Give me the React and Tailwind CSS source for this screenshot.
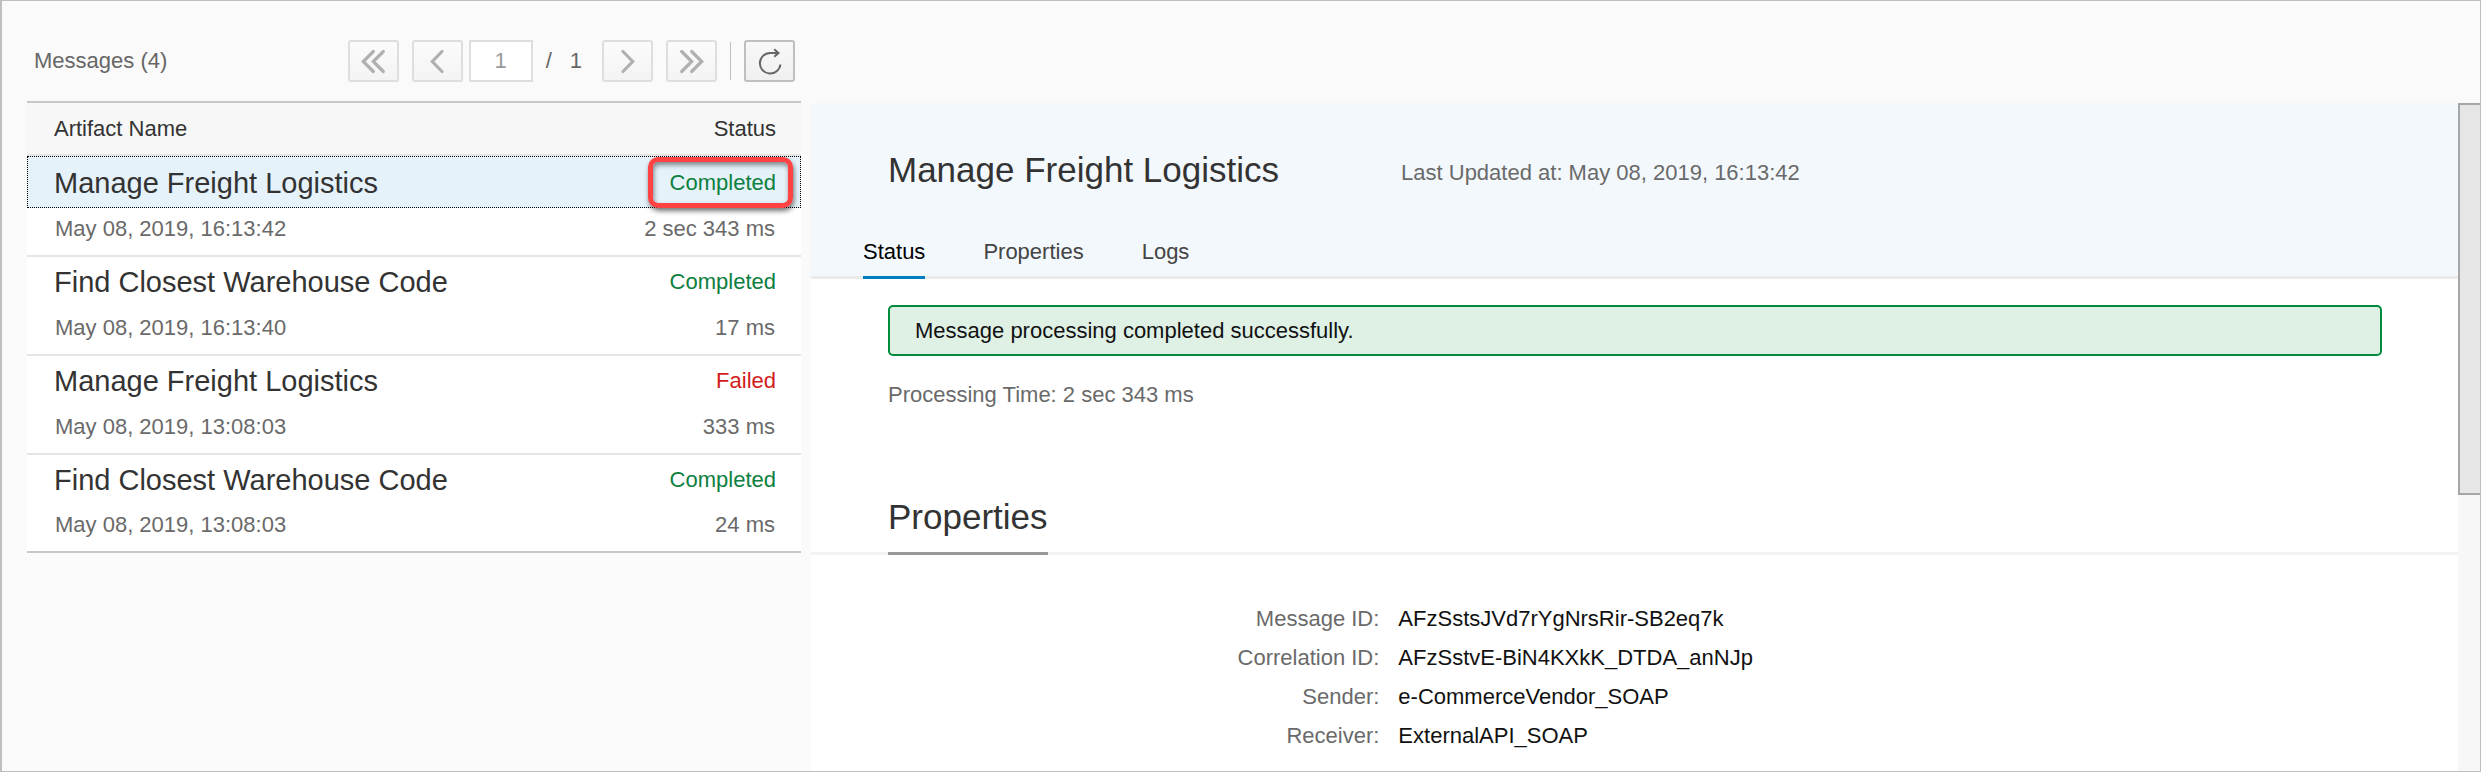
const messages = [
  { name: "Manage Freight Logistics", date: "May 08, 2019, 16:13:42", status: "Completed", duration: "2 sec 343 ms", selected: true },
  { name: "Find Closest Warehouse Code", date: "May 08, 2019, 16:13:40", status: "Completed", duration: "17 ms" },
  { name: "Manage Freight Logistics", date: "May 08, 2019, 13:08:03", status: "Failed", duration: "333 ms" },
  { name: "Find Closest Warehouse Code", date: "May 08, 2019, 13:08:03", status: "Completed", duration: "24 ms" },
];

const properties = [
  ["Message ID:", "AFzSstsJVd7rYgNrsRir-SB2eq7k"],
  ["Correlation ID:", "AFzSstvE-BiN4KXkK_DTDA_anNJp"],
  ["Sender:", "e-CommerceVendor_SOAP"],
  ["Receiver:", "ExternalAPI_SOAP"],
];

const iconPaths = {
  first: "M15.3 5.5 5.3 15.5 15.3 25.5M25.3 5.5 15.3 15.5 25.3 25.5",
  previous: "M20 5.5 10.3 15.5 20 25.5",
  next: "M10 5.5 19.7 15.5 10 25.5",
  last: "M4.7 5.5 14.7 15.5 4.7 25.5M14.7 5.5 24.7 15.5 14.7 25.5",
};

function PageButton({ icon, label }) {
  return (
    <button
      type="button"
      aria-label={label}
      disabled
      className="flex h-[42px] w-[51px] items-center justify-center rounded-[3px] border-2 border-[#dedede] bg-linear-to-b from-[#fbfbfb] to-[#f4f4f4] text-[#b0b0b0]"
    >
      <svg viewBox="0 0 30 30" className="size-[30px]" fill="none" stroke="currentColor" strokeWidth="3.2" strokeLinecap="round">
        <path d={iconPaths[icon]} />
      </svg>
    </button>
  );
}

function Toolbar() {
  return (
    <div className="flex items-center pt-[39px] pr-[6px] pb-[19px] pl-[7px] text-[#666]">
      <h2 className="flex-1">Messages (4)</h2>
      <div className="flex items-center gap-[13px]">
        <PageButton icon="first" label="First page" />
        <div className="flex items-center gap-[6px]">
          <PageButton icon="previous" label="Previous page" />
          <input
            aria-label="Page"
            defaultValue="1"
            disabled
            className="h-[42px] w-[64px] border-2 border-[#dedede] bg-white text-center text-[#999]"
          />
        </div>
        <span className="flex gap-[18px] pr-[7px]">
          <span>/</span>
          <span>1</span>
        </span>
        <PageButton icon="next" label="Next page" />
        <PageButton icon="last" label="Last page" />
        <span className="h-[38px] w-px bg-[#bfbfbf]" />
        <button
          type="button"
          aria-label="Refresh"
          className="flex h-[42px] w-[51px] items-center justify-center rounded-[3px] border-2 border-[#bfbfbf] bg-linear-to-b from-[#f8f8f8] to-[#f0f0f0] text-[#666]"
        >
          <svg viewBox="0 0 30 30" className="size-[30px]" fill="none" stroke="currentColor" strokeWidth="2">
            <path d="M25.4 18.5A10.3 10.3 0 1 1 15.2 7H23.5M19.2 3.2 23.5 7 19.2 10.8" />
          </svg>
        </button>
      </div>
    </div>
  );
}

function Message({ message }) {
  const { name, date, status, duration, selected } = message;
  return (
    <tbody className="group">
      <tr
        className={
          selected
            ? "h-[52px] bg-[#e5f2fa] outline-1 -outline-offset-1 outline-dotted outline-black"
            : "h-[50px]"
        }
      >
        <td className="pb-[8px] pl-[27px] align-bottom text-[29px] leading-[34px] text-[#333]">{name}</td>
        <td
          className={
            status === "Failed"
              ? "pr-[25px] pb-[10px] text-right align-bottom text-[#d11d1d]"
              : "pr-[25px] pb-[10px] text-right align-bottom text-[#0d8040]"
          }
        >
          <span className="relative inline-block">
            {status}
            {selected && (
              <span className="absolute -top-[11px] -right-[17px] -bottom-[10px] -left-[22px] rounded-[10px] border-5 border-[#ff4343] shadow-[1px_3px_5px_rgba(0,0,0,0.55),inset_1px_3px_5px_rgba(0,0,0,0.45)]" />
            )}
          </span>
        </td>
      </tr>
      <tr className="h-[49px] text-[#6a6a6a] group-last:h-[46px]">
        <td className="border-b-2 border-[#e5e5e5] pb-[11px] pl-[28px] align-bottom group-last:border-b-0">{date}</td>
        <td className="border-b-2 border-[#e5e5e5] pr-[26px] pb-[11px] text-right align-bottom group-last:border-b-0">{duration}</td>
      </tr>
    </tbody>
  );
}

function MessageList() {
  return (
    <section className="pr-[10px] pl-[25px]">
      <Toolbar />
      <div className="border-y-2 border-[#c8c8c8] bg-white">
        <table className="w-full border-separate border-spacing-0">
          <thead className="bg-[#f7f7f7] text-[#333]">
            <tr className="h-[53px]">
              <th className="border-b-2 border-[#e5e5e5] pl-[27px] text-left font-normal">Artifact Name</th>
              <th className="border-b-2 border-[#e5e5e5] pr-[25px] text-right font-normal">Status</th>
            </tr>
          </thead>
          {messages.map((message, i) => (
            <Message key={i} message={message} />
          ))}
        </table>
      </div>
    </section>
  );
}

function Detail() {
  return (
    <section className="mt-[102px] flex bg-white">
      <div className="min-w-0 flex-1">
        <header className="border-b-3 border-[#ebebeb] bg-[#f3f8fc]">
          <div className="flex items-center gap-[122px] pt-[46px] pl-[77px]">
            <h1 className="text-[35px] leading-[42px] text-[#333]">Manage Freight Logistics</h1>
            <p className="pt-[5px] text-[#6a6a6a]">Last Updated at: May 08, 2019, 16:13:42</p>
          </div>
          <nav className="-mb-[3px] flex gap-[58px] pt-[46px] pl-[52px] text-[#444]">
            <a href="#status" aria-current="page" className="border-b-3 border-[#007cc0] pb-[9px] text-black">Status</a>
            <a href="#properties" className="pb-[9px]">Properties</a>
            <a href="#logs" className="pb-[9px]">Logs</a>
          </nav>
        </header>
        <div id="status" className="pt-[26px] pr-[76px] pl-[77px]">
          <p role="status" className="flex h-[51px] items-center rounded-[5px] border-2 border-[#008c3c] bg-[#dff0e5] px-[25px] text-[#111]">
            Message processing completed successfully.
          </p>
          <p className="pt-[24px] text-[#6a6a6a]">Processing Time: 2 sec 343 ms</p>
        </div>
        <div id="properties">
          <div className="mt-[86px] flex border-b-3 border-[#f2f2f2] pl-[77px]">
            <h2 className="-mb-[3px] border-b-3 border-[#999] pb-[14px] text-[35px] leading-[42px] text-[#333]">Properties</h2>
          </div>
          <dl className="pt-[44px]">
            {properties.map(([label, value]) => (
              <div key={label} className="grid grid-cols-[575fr_1072fr] gap-[19px] leading-[39px]">
                <dt className="text-right text-[#6a6a6a]">{label}</dt>
                <dd className="text-[#111]">{value}</dd>
              </div>
            ))}
          </dl>
        </div>
      </div>
      <div className="w-[22px] bg-[#f7f7f7]">
        <div className="h-[392px] border-y-2 border-l-2 border-[#a6a6a6] bg-[#e6e6e6]" />
      </div>
    </section>
  );
}

export default function App() {
  return (
    <main className="grid min-h-screen grid-cols-[809fr_1669fr] border border-l-2 border-[#bfbfbf] bg-[#fafafa] font-['Liberation_Sans',Arial,sans-serif] text-[22px] leading-[30px]">
      <MessageList />
      <Detail />
    </main>
  );
}
